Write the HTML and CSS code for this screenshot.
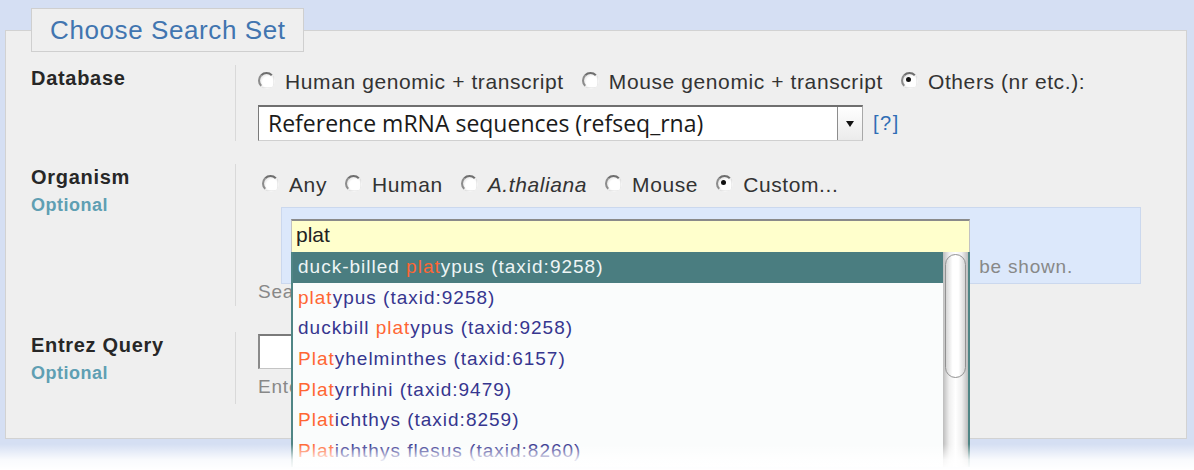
FILE: index.html
```html
<!DOCTYPE html>
<html>
<head>
<meta charset="utf-8">
<title>Choose Search Set</title>
<link rel="stylesheet" href="styles.css">
</head>
<body>
<fieldset class="panel">
  <legend class="panel-title">Choose Search Set</legend>

  <div class="row row-db">
    <div class="lbl"><div class="lbl-name">Database</div></div>
    <div class="ctl">
      <div class="opts opts-db">
        <label class="opt"><span class="radio"></span>Human genomic + transcript</label>
        <label class="opt"><span class="radio"></span>Mouse genomic + transcript</label>
        <label class="opt"><span class="radio checked"></span>Others (nr etc.):</label>
      </div>
      <div class="db-line">
        <div class="select">
          <span class="select-text">Reference mRNA sequences (refseq_rna)</span>
          <span class="select-btn"><span class="tri"></span></span>
        </div>
        <a class="help">[?]</a>
      </div>
    </div>
  </div>

  <div class="row row-org">
    <div class="lbl"><div class="lbl-name">Organism</div><div class="lbl-opt">Optional</div></div>
    <div class="ctl">
      <div class="opts opts-org">
        <label class="opt"><span class="radio"></span>Any</label>
        <label class="opt"><span class="radio"></span>Human</label>
        <label class="opt"><span class="radio"></span><i>A.thaliana</i></label>
        <label class="opt"><span class="radio"></span>Mouse</label>
        <label class="opt"><span class="radio checked"></span>Custom...</label>
      </div>
      <div class="org-box">
        <div class="ac">
          <div class="ac-input">plat</div>
          <div class="suggest">
            <ul class="sg-list">
              <li class="active">duck-billed <span class="m">plat</span>ypus (taxid:9258)</li>
              <li><span class="m">plat</span>ypus (taxid:9258)</li>
              <li>duckbill <span class="m">plat</span>ypus (taxid:9258)</li>
              <li><span class="m">Plat</span>yhelminthes (taxid:6157)</li>
              <li><span class="m">Plat</span>yrrhini (taxid:9479)</li>
              <li><span class="m">Plat</span>ichthys (taxid:8259)</li>
              <li><span class="m">Plat</span>ichthys flesus (taxid:8260)</li>
            </ul>
            <div class="scroll"><div class="thumb"></div></div>
          </div>
        </div>
        <div class="box-hint"><span>Only 20 top taxa will be shown.</span></div>
      </div>
      <div class="hint org-hint">Search</div>
    </div>
  </div>

  <div class="row row-ent">
    <div class="lbl"><div class="lbl-name">Entrez Query</div><div class="lbl-opt">Optional</div></div>
    <div class="ctl">
      <div class="ent-input"></div>
      <div class="hint ent-hint">Enter</div>
    </div>
  </div>
</fieldset>
<div class="fade"></div>
</body>
</html>
```

FILE: styles.css
```css
html, body {
  margin: 0;
  height: 100%;
  overflow: hidden;
}
body {
  position: relative;
  box-sizing: border-box;
  padding-top: 8px;
  background: #d5dff3;
  font-family: "Liberation Sans", Arial, sans-serif;
}

.panel {
  margin: 0 7px 0 5px;
  padding: 13px 0 34px;
  min-width: 0;
  border: 1px solid #d2d2d2;
  background: #efefef;
}
.panel-title {
  margin-left: 25px;
  padding: 6px 17px 6px 18px;
  border: 1px solid #cfcfcf;
  background: #efefef;
  color: #4175b0;
  font-size: 26px;
  line-height: 30px;
  letter-spacing: .6px;
}

.row {
  display: grid;
  grid-template-columns: 229px minmax(0, 1fr);
}
.row-org { margin-top: 23px; }
.row-ent { margin-top: 26px; }

.lbl { padding: 1px 0 0 25px; }
.lbl-name {
  font-size: 20px;
  font-weight: bold;
  line-height: 24px;
  letter-spacing: .7px;
  color: #272727;
}
.lbl-opt {
  margin-top: 5px;
  font-size: 18px;
  font-weight: bold;
  line-height: 22px;
  letter-spacing: .5px;
  color: #5f9fb3;
}

.ctl {
  min-width: 0;
  padding-left: 22px;
  border-left: 1px solid #d9d9d9;
}

.opts {
  display: flex;
  align-items: center;
  height: 26px;
  font-size: 21px;
  letter-spacing: .6px;
  color: #333;
  white-space: nowrap;
}
.opts-db { padding-top: 4px; }
.opts-org { padding: 8px 0 0 4px; }
.opt {
  display: flex;
  align-items: center;
  margin-right: 18px;
}
.radio {
  position: relative;
  flex: none;
  width: 17px;
  height: 17px;
  box-sizing: border-box;
  margin: 0 10px 4px 0;
  border: 2px solid transparent;
  border-top-color: #6e6e6e;
  border-left-color: #8c8c8c;
  border-radius: 50%;
  background: radial-gradient(circle at 62% 62%, #fff 48%, #dcdcdc 85%);
}
.radio.checked::after {
  content: "";
  position: absolute;
  left: 3px;
  top: 3px;
  width: 5px;
  height: 5px;
  border-radius: 50%;
  background: #111;
}

.db-line {
  display: flex;
  align-items: center;
  margin-top: 10px;
}
.select {
  display: flex;
  width: 605px;
  height: 36px;
  box-sizing: border-box;
  border: 1px solid #a8a8a8;
  border-top: 2px solid #6f6f6f;
  border-left-color: #7a7a7a;
  border-bottom-color: #d0d0d0;
  background: #fff;
}
.select-text {
  flex: 1;
  padding-left: 9px;
  font-family: "Open Sans", "Liberation Sans", sans-serif;
  font-size: 23px;
  line-height: 32px;
  color: #1a1a1a;
  white-space: nowrap;
  overflow: hidden;
}
.select-btn {
  display: flex;
  align-items: center;
  justify-content: center;
  width: 24px;
  border-left: 1px solid #8d8d8d;
  background: linear-gradient(#fff, #ebebeb);
}
.tri {
  border-left: 4px solid transparent;
  border-right: 4px solid transparent;
  border-top: 6px solid #111;
}
.help {
  margin-left: 10px;
  font-size: 20px;
  letter-spacing: 1.5px;
  color: #2f6db5;
}

.org-box {
  position: relative;
  margin: 9px 45px 0 23px;
  padding: 11px 0 4px 9px;
  border: 1px solid #cbd8ee;
  background: #dce8fb;
}
.ac {
  position: relative;
  width: 679px;
}
.ac-input {
  height: 33px;
  box-sizing: border-box;
  padding-left: 4px;
  border-top: 2px solid #8a8a8a;
  border-left: 1px solid #c2c2c2;
  border-right: 1px solid #c2c2c2;
  background: #ffffcc;
  font-size: 21px;
  line-height: 28px;
  color: #222;
}
.suggest {
  position: absolute;
  top: 100%;
  left: 0;
  z-index: 2;
  display: flex;
  width: 679px;
  height: 215px;
  box-sizing: border-box;
  border-left: 2px solid #4f8585;
  border-right: 2px solid #4f8585;
  background: #fafcfc;
}
.sg-list {
  flex: 1;
  margin: 0;
  padding: 0;
  list-style: none;
  font-size: 19px;
  letter-spacing: 1px;
  color: #36368f;
}
.sg-list li {
  height: 30.67px;
  padding-left: 5px;
  line-height: 30.67px;
  white-space: nowrap;
}
.sg-list li.active {
  background: #4a7d80;
  color: #eef5f5;
}
.m { color: #ff6633; }
.scroll {
  flex: none;
  width: 25px;
  box-sizing: border-box;
  padding-top: 2px;
  background: linear-gradient(to right, #bdbdbd, #efefef 25%, #fff 50%, #efefef 75%, #bdbdbd);
}
.thumb {
  height: 122px;
  margin: 0 2px;
  border: 1px solid #919191;
  border-radius: 11px;
  background: linear-gradient(to right, #d6d6d6, #fff 35%, #fff 65%, #d6d6d6);
}

.box-hint {
  display: flex;
  justify-content: flex-end;
  overflow: hidden;
  margin: 3px 0 0 685px;
  padding-right: 67px;
  font-size: 19px;
  line-height: 24px;
  letter-spacing: .8px;
  color: #888;
  white-space: nowrap;
}
.hint {
  width: 33px;
  overflow: hidden;
  font-size: 19px;
  line-height: 22px;
  letter-spacing: .8px;
  color: #888;
  white-space: nowrap;
}
.org-hint {
  margin-top: -3px;
  padding-bottom: 3px;
}
.ent-input {
  width: 520px;
  height: 35px;
  box-sizing: border-box;
  margin-top: 2px;
  border: 1px solid #c4c4c4;
  border-top: 2px solid #7a7a7a;
  border-left: 2px solid #8a8a8a;
  background: #fff;
}
.ent-hint {
  margin-top: 7px;
  padding-bottom: 6px;
}

.fade {
  position: absolute;
  left: 0;
  right: 0;
  top: 444px;
  z-index: 5;
  height: 26px;
  background: linear-gradient(rgba(255, 255, 255, 0), rgba(255, 255, 255, .85) 60%, #fff);
}
```
